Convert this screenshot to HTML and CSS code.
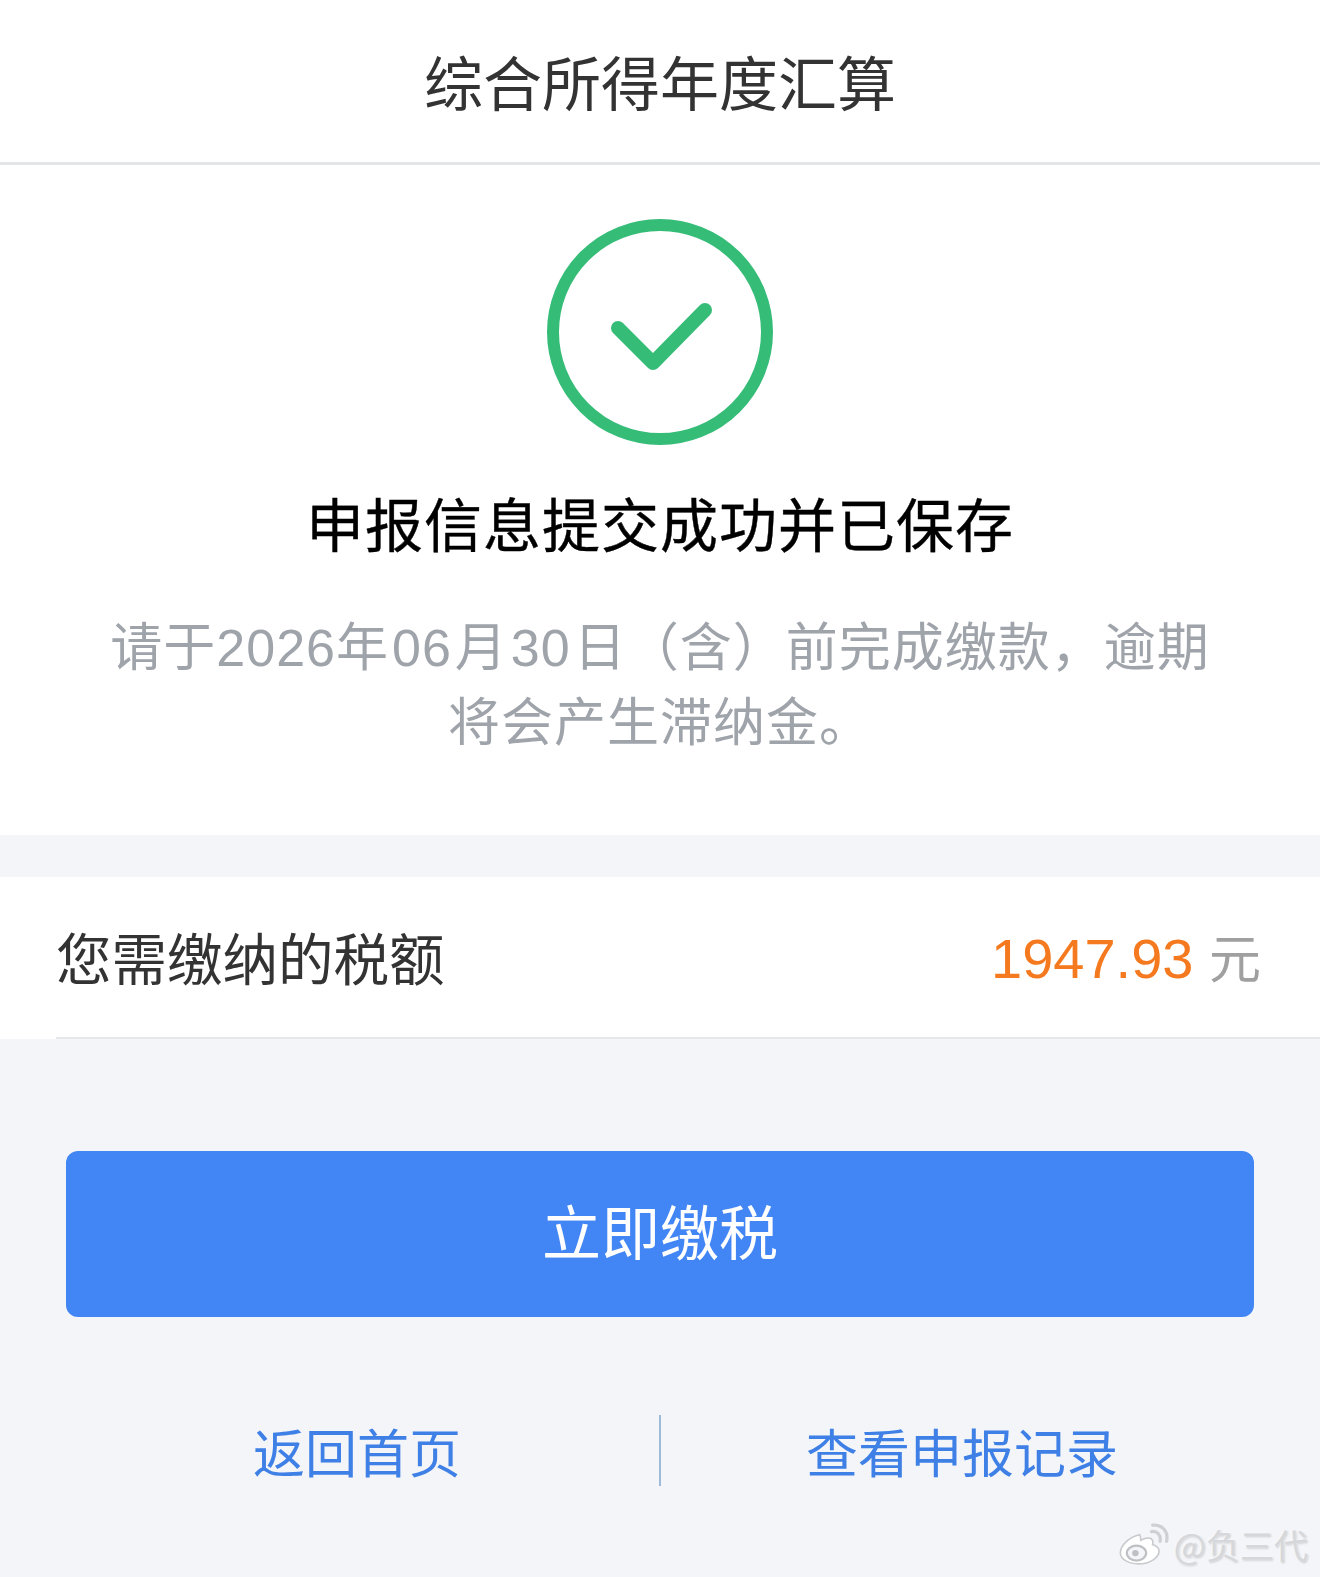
FILE: index.html
```html
<!DOCTYPE html>
<html lang="zh-CN">
<head>
  <meta charset="UTF-8">
  <meta name="viewport" content="width=device-width, initial-scale=1.0">
  <title>综合所得年度汇算</title>
  <link rel="stylesheet" href="styles.css">
</head>
<body>
  <header class="nav-bar">综合所得年度汇算</header>

  <section class="result">
    <svg class="result-icon" viewBox="0 0 226 226" aria-hidden="true">
      <circle cx="113" cy="113" r="107" fill="none" stroke="#35bd78" stroke-width="12"/>
      <path d="M71 109 L106 144 L158 91" fill="none" stroke="#35bd78" stroke-width="14" stroke-linecap="round" stroke-linejoin="round"/>
    </svg>
    <h1 class="result-title">申报信息提交成功并已保存</h1>
    <p class="result-note">请于2026年<span class="num">06</span>月<span class="num">30</span>日（含）前完成缴款，逾期<br>将会产生滞纳金。</p>
  </section>

  <section class="amount">
    <div class="amount-row">
      <span class="amount-label">您需缴纳的税额</span>
      <span class="amount-value">1947.93 <span class="amount-unit">元</span></span>
    </div>
  </section>

  <div class="pay-wrap">
    <button class="pay-btn" type="button">立即缴税</button>
  </div>

  <nav class="links">
    <a class="link" href="#">返回首页</a>
    <a class="link" href="#">查看申报记录</a>
  </nav>

  <div class="watermark">
    <svg class="weibo" viewBox="0 0 48 40" aria-hidden="true">
      <path d="M20 11C10 13 2 21 2 28c0 6 8 10 17 10 11 0 19-6 19-12 0-4-4-5-6-6 1-3 0-6-4-6-2 0-5 1-7 2 0-3-1-6-1-5z" fill="#fff" stroke="#c9cacd" stroke-width="1.5"/>
      <ellipse cx="17" cy="28" rx="9" ry="7" fill="#f3f5f9" stroke="#bfc0c3" stroke-width="2"/>
      <circle cx="16" cy="28" r="3" fill="#bfc0c3"/>
      <path d="M31 8c5-1 9 3 8 9M32 2c9-1 15 6 13 15" fill="none" stroke="#cfd0d3" stroke-width="3" stroke-linecap="round"/>
    </svg>
    <span>@负三代</span>
  </div>
</body>
</html>
```

FILE: styles.css
```css
* {
  box-sizing: border-box;
}

html, body {
  margin: 0;
  padding: 0;
}

body {
  position: relative;
  width: 1320px;
  height: 1577px;
  overflow: hidden;
  background-color: #f3f5f9;
  font-family: "Noto Sans CJK SC", "Liberation Sans", sans-serif;
}

.nav-bar {
  height: 165px;
  padding-bottom: 1px;
  display: flex;
  align-items: center;
  justify-content: center;
  background-color: #fff;
  border-bottom: 3px solid #e4e5e7;
  font-size: 59px;
  color: #333;
}

.result {
  height: 670px;
  padding-top: 54px;
  display: flex;
  flex-direction: column;
  align-items: center;
  background-color: #fff;
}

.result-icon {
  width: 226px;
  height: 226px;
  display: block;
}

.result-title {
  margin: 42px 0 0;
  height: 70px;
  line-height: 70px;
  font-size: 58px;
  font-weight: 400;
  letter-spacing: 1px;
  color: #000;
  -webkit-text-stroke: 0.4px #000;
  white-space: nowrap;
}

.result-note {
  margin: 54px 0 0;
  font-family: "Liberation Sans", "Noto Sans CJK SC", sans-serif;
  font-size: 52px;
  letter-spacing: 1px;
  line-height: 75px;
  text-align: center;
  color: #9fa3aa;
  white-space: nowrap;
}

.num {
  padding: 0 3px;
}

.amount {
  margin-top: 42px;
  padding-left: 56px;
  background-color: #fff;
}

.amount-row {
  height: 162px;
  padding: 0 59px 4px 0;
  display: flex;
  align-items: center;
  justify-content: space-between;
  border-bottom: 2px solid #e6e7ea;
}

.amount-label {
  margin-top: 2px;
  font-size: 55.5px;
  color: #333;
}

.amount-value {
  font-family: "Liberation Sans", sans-serif;
  font-size: 56px;
  color: #f57a1f;
}

.amount-unit {
  font-family: "Noto Sans CJK SC", sans-serif;
  font-size: 52px;
  color: #a0a0a0;
}

.pay-wrap {
  padding: 112px 66px 0;
}

.pay-btn {
  display: block;
  width: 100%;
  height: 166px;
  padding: 0 0 10px;
  border: none;
  border-radius: 12px;
  background-color: #4285f4;
  font-family: "Liberation Sans", "Noto Sans CJK SC", sans-serif;
  font-size: 59px;
  color: #fff;
}

.links {
  margin-top: 98px;
  padding: 0 57px 0 55px;
  display: grid;
  grid-template-columns: 1fr 1fr;
  grid-template-rows: 71px;
}

.link {
  display: flex;
  align-items: center;
  justify-content: center;
  font-size: 52px;
  line-height: 1;
  color: #3f80e6;
  text-decoration: none;
}

.link + .link {
  border-left: 2px solid #9dbbd9;
}

.watermark {
  position: absolute;
  right: 12px;
  bottom: 8px;
  display: flex;
  align-items: center;
  gap: 4px;
  font-size: 34px;
  color: #d6d7da;
  text-shadow: 0 0 3px #fff, 1px 1px 2px #b9babd;
}

.weibo {
  width: 52px;
  height: 43px;
}
```
